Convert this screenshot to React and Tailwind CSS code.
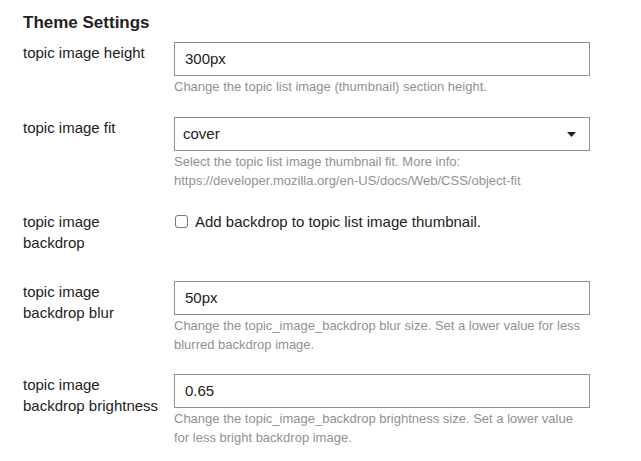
const font = { fontFamily: '"Liberation Sans", Arial, sans-serif' };

function Row({ label, children, help, extra = "mb-[21px]" }) {
  return (
    <div className={`flex ${extra}`}>
      <div className="w-[151px] pr-[15px] shrink-0 text-[15px] leading-[21px] text-[#222]">
        {label}
      </div>
      <div className="w-[416px]">
        {children}
        {help && (
          <div className="mt-[1px] text-[13px] leading-[19px] text-[#919191]">
            {help}
          </div>
        )}
      </div>
    </div>
  );
}

function TextInput({ value }) {
  return (
    <div className="h-[34px] border border-[#919191] bg-white flex items-center px-[10px] text-[15px] text-[#222]">
      {value}
    </div>
  );
}

export default function App() {
  return (
    <div className="w-[641px] h-[461px] bg-white pl-[23px] pt-[13px]" style={font}>
      <h3 className="text-[17px] leading-[20px] font-bold text-[#222] mb-[9px]">
        Theme Settings
      </h3>

      <Row
        label="topic image height"
        help="Change the topic list image (thumbnail) section height."
      >
        <TextInput value="300px" />
      </Row>

      <Row
        label="topic image fit"
        help={
          <>
            Select the topic list image thumbnail fit. More info:
            <br />
            https://developer.mozilla.org/en-US/docs/Web/CSS/object-fit
          </>
        }
      >
        <div className="h-[34px] border border-[#919191] bg-white flex items-center justify-between pl-[8px] pr-[13px] text-[15px] text-[#222]">
          <span>cover</span>
          <svg width="9" height="5" viewBox="0 0 9 5">
            <path d="M0 0h9L4.5 5z" fill="#222" />
          </svg>
        </div>
      </Row>

      <Row label="topic image backdrop" extra="mb-[21px] pb-[7px]">
        <label className="flex items-center gap-[7px] text-[15px] leading-[21px] text-[#222]">
          <span className="w-[13px] h-[13px] ml-[1px] border border-[#767676] rounded-[3px] bg-white" />
          Add backdrop to topic list image thumbnail.
        </label>
      </Row>

      <Row
        label="topic image backdrop blur"
        help="Change the topic_image_backdrop blur size. Set a lower value for less blurred backdrop image."
        extra="mb-[20px]"
      >
        <TextInput value="50px" />
      </Row>

      <Row
        label="topic image backdrop brightness"
        help="Change the topic_image_backdrop brightness size. Set a lower value for less bright backdrop image."
      >
        <TextInput value="0.65" />
      </Row>
    </div>
  );
}
